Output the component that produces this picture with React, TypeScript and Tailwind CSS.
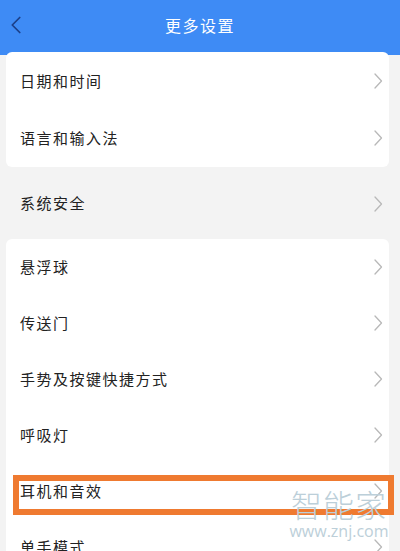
import { ChevronLeft } from 'lucide-react';

const font = { fontFamily: '"Noto Sans CJK SC", "Noto Sans", sans-serif' };

function Arrow() {
    return (
        <svg width="10" height="16" viewBox="0 0 10 16" className="shrink-0">
            <path d="M2 1 L8.5 8 L2 15" fill="none" stroke="#b8b8b8" strokeWidth="1.3" strokeLinecap="round" strokeLinejoin="round" />
        </svg>
    );
}

function Row({ label, h = 'h-[56px]' }: { label: string; h?: string }) {
    return (
        <div className={`flex items-center justify-between pl-[14px] pr-[6px] ${h}`}>
            <span className="text-[15px] tracking-[1.5px] text-[#222]">{label}</span>
            <Arrow />
        </div>
    );
}

export default function App() {
    const secondGroup = ['悬浮球', '传送门', '手势及按键快捷方式', '呼吸灯', '耳机和音效', '单手模式'];

    return (
        <div className="relative h-[551px] w-[400px] overflow-hidden bg-[#f3f3f3]" style={font}>
            {/* header */}
            <div className="relative flex h-[55px] items-start justify-center bg-[#3e8bf5] pt-[13px]">
                <ChevronLeft className="absolute left-px top-[10px] text-[#1c3f88]" size={30} strokeWidth={1.4} />
                <span className="text-[16px] tracking-[1.5px] text-white">更多设置</span>
            </div>

            <div className="relative -mt-[3px] ml-[6px] w-[383px] rounded-[6px] bg-white">
                <Row label="日期和时间" h="h-[57.5px]" />
                <Row label="语言和输入法" h="h-[57.5px]" />
            </div>

            <div className="ml-[6px] w-[383px] pt-[1px]">
                <Row label="系统安全" h="h-[71px]" />
            </div>

            <div className="ml-[6px] w-[383px] rounded-t-[6px] bg-white">
                {secondGroup.map((item) => (
                    <Row key={item} label={item} />
                ))}
            </div>

            {/* highlight box */}
            <div className="absolute left-[13px] top-[475px] h-[40px] w-[381px] border-[6px] border-[#ef7a30]" />

            {/* watermark */}
            <div className="pointer-events-none absolute left-[289px] top-[485px] flex w-[100px] flex-col items-center text-[#bccfd9]">
                <span className="text-[31px] leading-[38px] tracking-[1px]" style={{ fontWeight: 300 }}>智能家</span>
                <span className="text-[16px] leading-[16px]" style={{ fontFamily: '"Open Sans", sans-serif' }}>www.znj.com</span>
            </div>
        </div>
    );
}
